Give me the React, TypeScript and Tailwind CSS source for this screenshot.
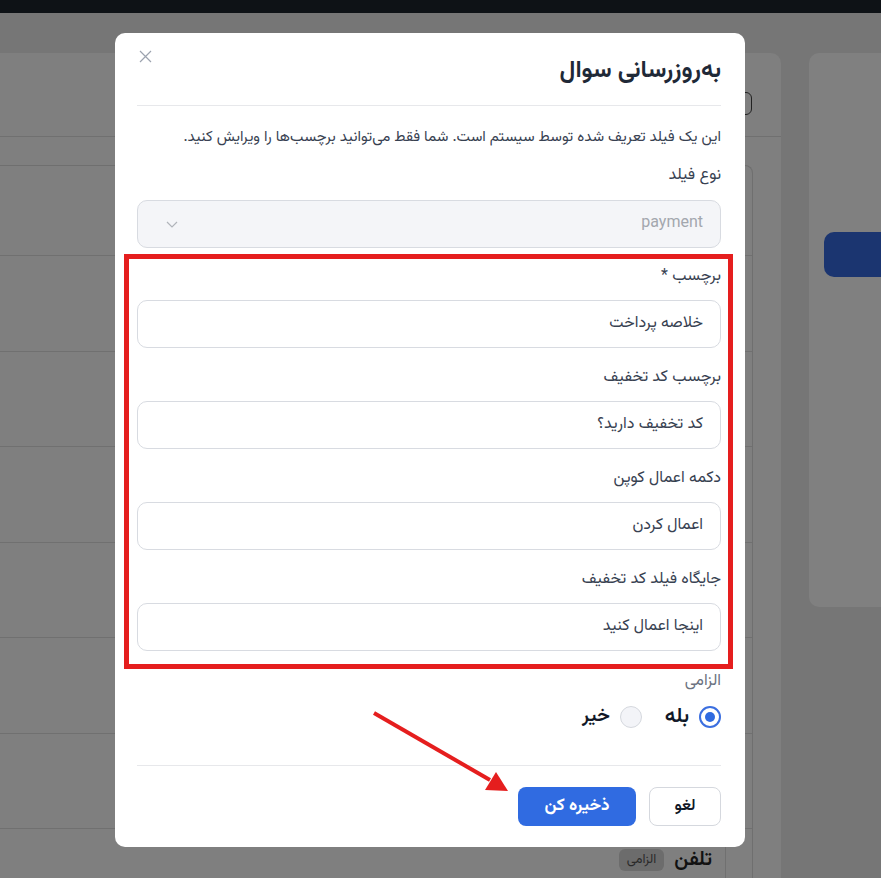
import React from "react";

const fa = { fontFamily: '"Vazirmatn", "Noto Sans Arabic", "DejaVu Sans", "Noto Sans", sans-serif' };

function Field({ label, value }: { label: string; value: string }) {
  return (
    <div className="flex flex-col">
      <div className="h-[20px] text-[16px] leading-[20px] text-[#374151]">{label}</div>
      <div className="mt-[13px] h-[48px] rounded-[10px] border border-[#d8dbe1] bg-white flex items-center px-[17px] text-[16px] text-[#374151]">
        {value}
      </div>
    </div>
  );
}

export default function App() {
  const rows = [0, 1, 2, 3, 4, 5];
  return (
    <div dir="ltr" style={fa} className="relative w-[881px] h-[878px] overflow-hidden bg-[#767676]">
      {/* background page */}
      <div className="h-[13px] bg-[#0e1216]" />
      <div className="flex gap-[28px] pt-[40px]">
        <div className="relative w-[781px] h-[900px] shrink-0 rounded-tr-[10px] bg-[#7f7f7f]">
          <div className="h-[84px] border-b border-[#707070] relative">
            <div className="absolute right-[29px] top-[39px] w-[40px] h-[23px] rounded-md border border-[#222]" />
          </div>
          <div className="mt-[28px] mr-[28px] rounded-tr-[8px] border-t border-r border-[#6f6f6f]">
            <div className="h-[90px] border-b border-[#707070]" />
            {rows.map((r) => (
              <div key={r} className="h-[95.5px] border-b border-[#707070]" />
            ))}
            <div className="h-[80px] flex justify-end">
              <div dir="rtl" className="flex items-center gap-[10px] h-[62px] pr-[13px]">
                <span className="text-[20px] leading-[22px] font-semibold text-[#111]">تلفن</span>
                <span className="h-[22px] px-[8px] rounded-md bg-[#6c6c6c] text-[13px] leading-[22px] text-[#2a2a2a]">الزامی</span>
              </div>
              <div className="w-[27px] border-l border-[#707070]" />
            </div>
          </div>
        </div>
        <div className="relative w-[100px] h-[554px] shrink-0 rounded-l-[10px] bg-[#808080]">
          <div className="absolute left-[15px] top-[179px] w-[90px] h-[45px] rounded-l-[10px] bg-[#1b3570]" />
        </div>
      </div>

      {/* modal */}
      <div dir="rtl" className="absolute left-[115px] top-[33px] w-[630px] h-[814px] rounded-[10px] bg-white pr-[24px] pl-[22px] pt-[24px]">
        <button className="absolute left-[22px] top-[15px] w-[16px] h-[16px] flex items-center justify-center text-[#9ca3af]">
          <svg width="13" height="13" viewBox="0 0 13 13" fill="none" stroke="currentColor" strokeWidth="1.2">
            <path d="M1 1L12 12M12 1L1 12" />
          </svg>
        </button>
        <h2 className="h-[28px] text-[24px] leading-[28px] font-bold text-[#1f2937]">به‌روزرسانی سوال</h2>
        <div className="mt-[20px] border-t border-[#e7e8eb]" />
        <p className="mt-[22px] h-[20px] text-[15px] leading-[20px] text-[#374151]">
          این یک فیلد تعریف شده توسط سیستم است. شما فقط می‌توانید برچسب‌ها را ویرایش کنید.
        </p>
        <div className="mt-[18px] h-[20px] text-[16px] leading-[20px] text-[#374151]">نوع فیلد</div>
        <div className="mt-[14px] h-[48px] rounded-[10px] border border-[#d8dbe1] bg-[#f4f5f8] flex items-center justify-between px-[17px]">
          <span className="text-[16px] leading-[20px] pb-[4px] text-[#a3a7ae]" style={{ fontFamily: '"Roboto", sans-serif' }}>payment</span>
          <svg width="12" height="7" viewBox="0 0 12 7" fill="none" stroke="#b0b4ba" strokeWidth="1.2" className="ml-[11px]">
            <path d="M1 1L6 6L11 1" />
          </svg>
        </div>

        <div className="mt-[19px] flex flex-col gap-[20px]">
          <Field label="برچسب *" value="خلاصه پرداخت" />
          <Field label="برچسب کد تخفیف" value="کد تخفیف دارید؟" />
          <Field label="دکمه اعمال کوپن" value="اعمال کردن" />
          <Field label="جایگاه فیلد کد تخفیف" value="اینجا اعمال کنید" />
        </div>

        <div className="mt-[21px] h-[20px] text-[16px] leading-[20px] text-[#6b7280]">الزامی</div>
        <div className="mt-[14px] h-[22px] flex items-center gap-[23px]">
          <label className="flex items-center gap-[10px] h-[22px]">
            <span className="w-[22px] h-[22px] rounded-full border-2 border-[#3b6fe0] flex items-center justify-center">
              <span className="w-[10px] h-[10px] rounded-full bg-[#2f6ae0]" />
            </span>
            <span className="text-[21px] leading-[22px] font-semibold text-[#111827]">بله</span>
          </label>
          <label className="flex items-center gap-[10px] h-[22px]">
            <span className="w-[22px] h-[22px] rounded-full border border-[#d5d8de] bg-[#f3f4f8]" />
            <span className="text-[19px] leading-[22px] font-semibold text-[#111827]">خیر</span>
          </label>
        </div>
        <div className="mt-[37px] border-t border-[#e7e8eb]" />
        <div className="mt-[21px] flex gap-[13px]">
          <button className="w-[72px] h-[39px] rounded-[8px] border border-[#d5d8de] bg-white text-[16px] font-semibold text-[#111827]">لغو</button>
          <button className="w-[118px] h-[39px] rounded-[8px] bg-[#306be1] text-[17px] font-bold text-white">ذخیره کن</button>
        </div>

        {/* red annotation box */}
        <div className="absolute left-[9px] top-[221px] w-[609px] h-[415px] border-[5px] border-[#e51e1e] pointer-events-none" />
      </div>

      {/* red arrow */}
      <svg className="absolute left-0 top-0 pointer-events-none" width="881" height="878">
        <line x1="374" y1="713" x2="490" y2="780" stroke="#e51e1e" strokeWidth="4" />
        <polygon points="508,791 485,790 496,772" fill="#e51e1e" />
      </svg>
    </div>
  );
}
